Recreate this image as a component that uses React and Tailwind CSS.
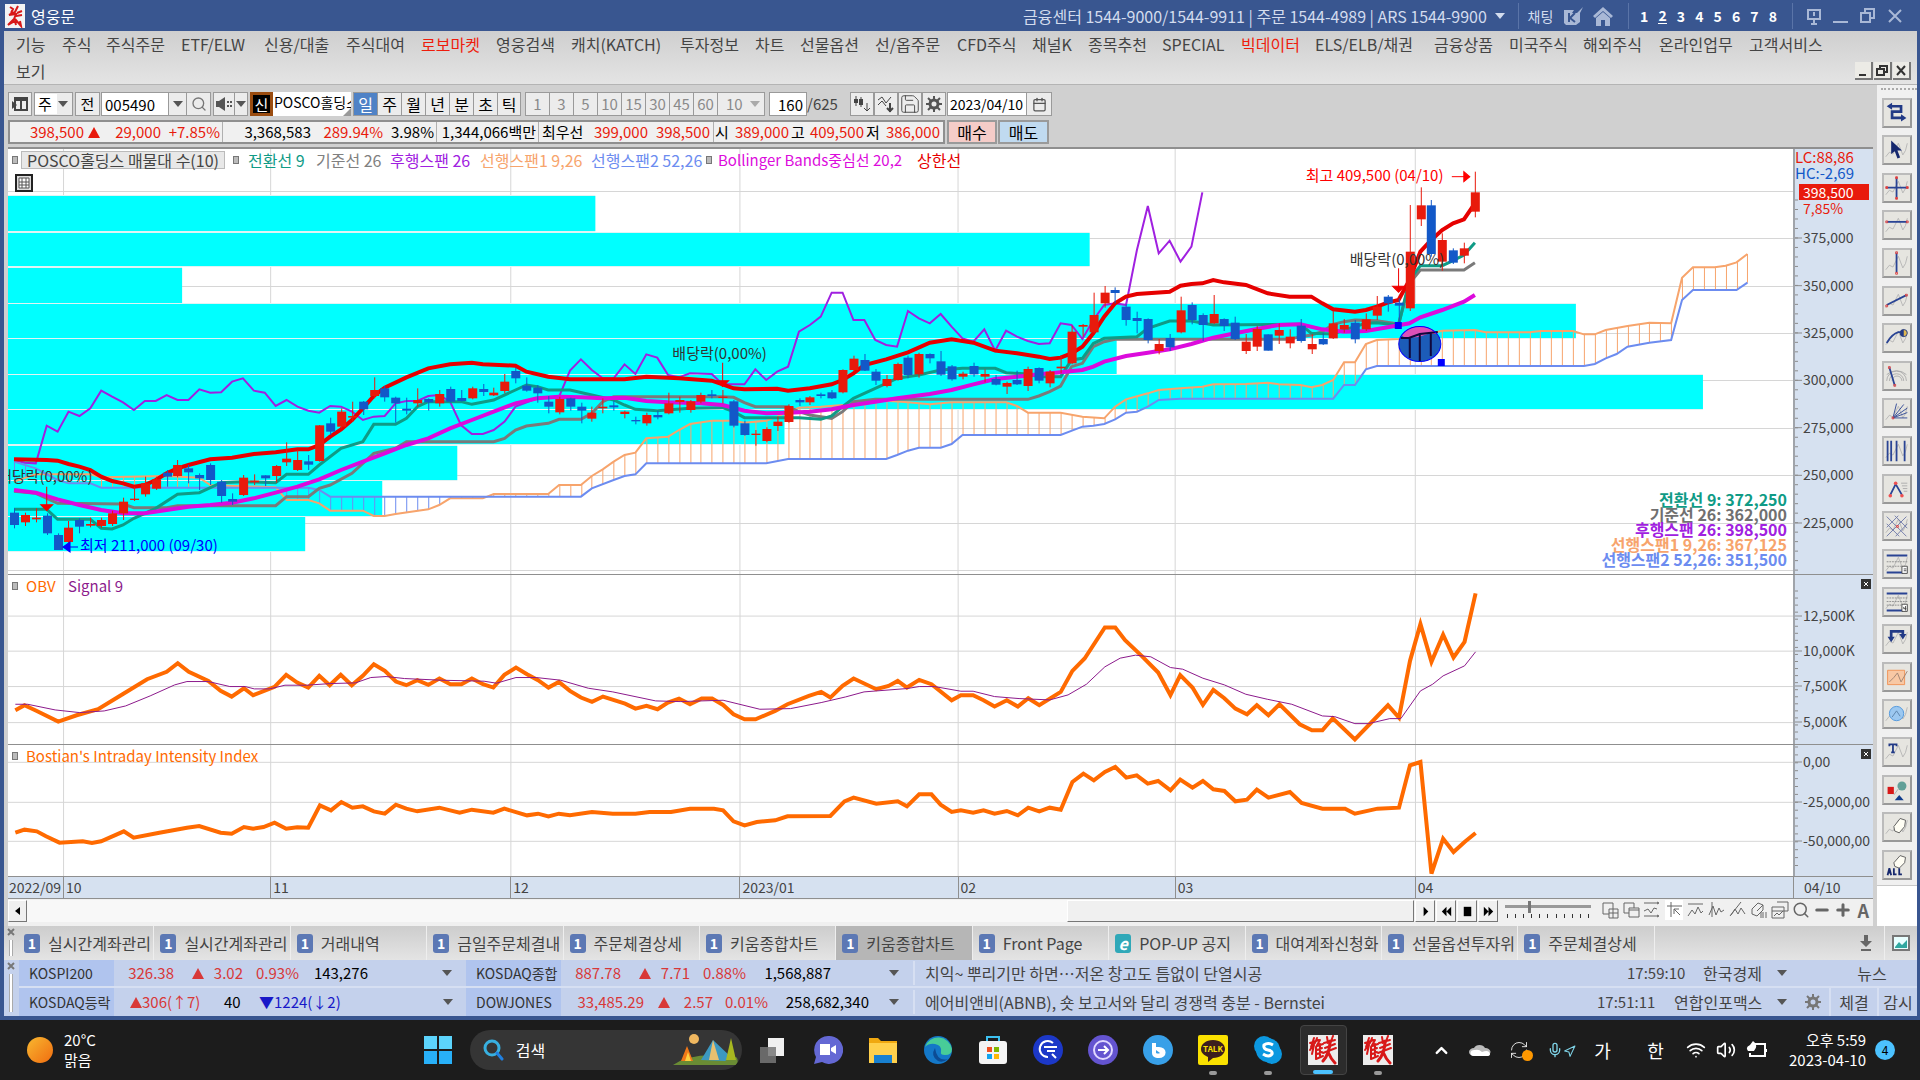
import { useState } from 'react'
import {
  Calendar,
  ChevronUp,
  Mic,
  Minus,
  Navigation,
  Plus,
  RefreshCw,
  Save,
  Search,
  Settings,
  Volume2,
  Wifi,
} from 'lucide-react'

const MENU = [
  ['기능', 'w-[46px]'],
  ['주식', 'w-[44px]'],
  ['주식주문', 'w-[75px]'],
  ['ETF/ELW', 'w-[83px]'],
  ['신용/대출', 'w-[82px]'],
  ['주식대여', 'w-[75px]'],
  ['로보마켓', 'w-[75px] text-[#ee1c0c]'],
  ['영웅검색', 'w-[75px]'],
  ['캐치(KATCH)', 'w-[109px]'],
  ['투자정보', 'w-[75px]'],
  ['차트', 'w-[45px]'],
  ['선물옵션', 'w-[75px]'],
  ['선/옵주문', 'w-[82px]'],
  ['CFD주식', 'w-[75px]'],
  ['채널K', 'w-[56px]'],
  ['종목추천', 'w-[74px]'],
  ['SPECIAL', 'w-[79px]'],
  ['빅데이터', 'w-[74px] text-[#ee1c0c]'],
  ['ELS/ELB/채권', 'w-[119px]'],
  ['금융상품', 'w-[75px]'],
  ['미국주식', 'w-[74px]'],
  ['해외주식', 'w-[76px]'],
  ['온라인업무', 'w-[90px]'],
  ['고객서비스', 'w-[80px]'],
]

const TABS = [
  '실시간계좌관리',
  '실시간계좌관리',
  '거래내역',
  '금일주문체결내',
  '주문체결상세',
  '키움종합차트',
  '키움종합차트',
  'Front Page',
  'POP-UP 공지',
  '대여계좌신청화',
  '선물옵션투자위',
  '주문체결상세',
]

// chart geometry: 160 bars, y values are thirds of a pixel counted from the toolbar
const PLOT_W = 1784
const PRICE_H = 425
const X = (i) => 6 + i * 10.896
const Y = (v) => (v - 27) / 3

const MONTHS = [
  [55, '10'],
  [262, '11'],
  [502, '12'],
  [731, '2023/01'],
  [949, '02'],
  [1166, '03'],
  [1406, '04'],
]

const PRICE_TICKS = [
  [294, '375,000'],
  [437, '350,000'],
  [579, '325,000'],
  [721, '300,000'],
  [863, '275,000'],
  [1006, '250,000'],
  [1149, '225,000'],
]

const VOLUME_BARS = [
  [168, 273, 587],
  [278, 378, 1081],
  [383, 487, 174],
  [491, 592, 1567],
  [597, 701, 1108],
  [705, 807, 1694],
  [811, 914, 776],
  [919, 1020, 449],
  [1024, 1129, 374],
  [1132, 1233, 297],
]

// high, body top, body bottom, low, up(1)/down(0)
const CANDLES = [
  [1105, 1118, 1155, 1165, 0], [1118, 1125, 1147, 1158, 1], [1105, 1133, 1138, 1147, 1], [1120, 1127, 1180, 1185, 0],
  [1180, 1185, 1230, 1230, 0], [1143, 1163, 1206, 1210, 1], [1135, 1140, 1160, 1180, 0], [1133, 1152, 1157, 1162, 1],
  [1133, 1140, 1158, 1163, 1], [1112, 1120, 1152, 1158, 1], [1073, 1085, 1120, 1140, 1], [1040, 1076, 1080, 1083, 1],
  [1010, 1030, 1063, 1070, 1], [1010, 1018, 1046, 1050, 1], [990, 998, 1010, 1040, 0], [960, 975, 1008, 1012, 1],
  [975, 985, 997, 1030, 0], [1000, 1005, 1015, 1050, 0], [970, 975, 1020, 1035, 0], [1020, 1025, 1068, 1088, 0],
  [1060, 1077, 1085, 1095, 0], [1005, 1013, 1065, 1068, 1], [1003, 1022, 1027, 1035, 1], [1006, 1006, 1015, 1038, 0],
  [975, 978, 1008, 1028, 1], [907, 956, 967, 978, 1], [930, 960, 990, 993, 1], [945, 964, 974, 990, 0],
  [855, 856, 963, 965, 1], [833, 850, 875, 885, 0], [805, 815, 860, 865, 1], [785, 828, 833, 845, 1],
  [783, 785, 808, 825, 0], [712, 750, 768, 775, 1], [738, 745, 772, 785, 0], [770, 773, 790, 848, 0],
  [773, 806, 812, 823, 0], [745, 780, 790, 800, 1], [775, 777, 787, 812, 0], [750, 762, 790, 800, 1],
  [740, 747, 785, 788, 0], [750, 774, 783, 785, 0], [740, 745, 775, 778, 1], [732, 747, 756, 768, 0],
  [743, 758, 766, 768, 1], [702, 725, 753, 760, 1], [683, 693, 715, 730, 0], [712, 737, 752, 755, 0],
  [735, 743, 760, 788, 0], [768, 785, 800, 820, 0], [770, 777, 817, 823, 1], [773, 775, 800, 812, 0],
  [788, 800, 812, 850, 0], [800, 818, 836, 845, 1], [775, 800, 805, 820, 1], [782, 796, 802, 812, 0],
  [812, 815, 822, 835, 1], [830, 840, 844, 853, 0], [818, 825, 850, 857, 1], [812, 825, 832, 838, 0],
  [758, 790, 820, 823, 1], [770, 780, 786, 818, 1], [780, 784, 810, 818, 1], [758, 765, 785, 790, 1],
  [750, 763, 768, 775, 0], [750, 770, 774, 790, 1], [780, 784, 857, 862, 0], [842, 850, 885, 887, 0],
  [870, 881, 885, 917, 1], [862, 867, 903, 907, 1], [830, 845, 858, 873, 1], [793, 798, 846, 848, 1],
  [775, 780, 787, 798, 0], [768, 772, 787, 795, 1], [758, 763, 768, 775, 0], [750, 757, 775, 777, 0],
  [688, 690, 757, 760, 1], [647, 656, 690, 695, 1], [642, 660, 692, 693, 0], [687, 695, 722, 735, 0],
  [705, 717, 738, 742, 1], [668, 672, 720, 722, 1], [647, 653, 705, 715, 0], [638, 642, 703, 713, 1],
  [640, 642, 655, 670, 0], [633, 664, 704, 708, 0], [675, 679, 718, 722, 0], [695, 701, 710, 718, 1],
  [668, 678, 703, 710, 0], [688, 702, 710, 727, 1], [705, 717, 734, 736, 0], [725, 729, 740, 762, 1],
  [692, 720, 733, 735, 0], [680, 687, 738, 753, 1], [682, 684, 722, 730, 0], [690, 695, 730, 742, 1],
  [647, 680, 685, 700, 1], [557, 575, 670, 673, 1], [552, 555, 560, 590, 1], [458, 525, 577, 580, 1],
  [438, 458, 490, 503, 1], [442, 450, 459, 490, 0], [492, 500, 540, 557, 0], [515, 534, 543, 580, 0],
  [535, 537, 600, 610, 0], [597, 612, 633, 643, 1], [582, 594, 622, 633, 0], [470, 511, 577, 580, 1],
  [487, 495, 540, 553, 0], [520, 525, 555, 603, 0], [465, 522, 550, 552, 1], [535, 537, 558, 573, 0],
  [530, 548, 597, 600, 0], [582, 605, 633, 642, 1], [558, 567, 620, 633, 1], [583, 583, 632, 632, 0],
  [550, 570, 587, 612, 1], [568, 590, 610, 625, 1], [537, 557, 603, 608, 0], [582, 612, 628, 642, 1],
  [580, 597, 613, 615, 0], [513, 550, 595, 597, 1], [537, 555, 568, 578, 1], [540, 548, 598, 610, 0],
  [520, 538, 568, 573, 1], [468, 500, 527, 540, 1], [465, 470, 490, 515, 0], [475, 488, 497, 550, 0],
  [195, 335, 505, 513, 1], [142, 196, 238, 258, 1], [180, 196, 342, 350, 0], [280, 300, 365, 392, 1],
  [325, 331, 368, 372, 0], [308, 325, 347, 370, 1], [95, 157, 215, 232, 1],
]

// [bar index, y] pairs written flat
const UPPER = [0, 958, 3, 960, 4, 962, 5, 972, 6, 980, 7, 990, 8, 1010, 9, 1023, 10, 1030, 11, 1040, 12, 1035, 13, 1020, 14, 1000, 15, 985, 16, 975, 18, 958, 20, 953, 22, 942, 24, 937, 26, 928, 27, 928, 28, 915, 29, 890, 30, 868, 31, 840, 32, 805, 33, 768, 34, 743, 36, 712, 38, 685, 40, 673, 42, 668, 43, 673, 46, 677, 47, 695, 49, 710, 51, 718, 56, 718, 58, 710, 61, 715, 64, 722, 65, 733, 66, 745, 67, 748, 70, 746, 71, 752, 73, 745, 75, 733, 76, 720, 77, 700, 78, 675, 80, 658, 82, 637, 84, 608, 86, 598, 88, 608, 90, 632, 92, 640, 94, 650, 95, 657, 96, 653, 97, 640, 98, 620, 99, 580, 100, 530, 101, 490, 102, 470, 103, 462, 106, 455, 107, 437, 108, 432, 109, 430, 110, 420, 111, 427, 113, 435, 115, 460, 117, 470, 119, 470, 120, 490, 121, 508, 123, 515, 124, 510, 125, 500, 126, 488, 127, 480, 128, 420, 129, 335, 130, 300, 131, 270, 132, 250, 133, 238, 134, 190]
const MIDDLE = [0, 1050, 2, 1058, 4, 1078, 6, 1095, 8, 1110, 10, 1120, 12, 1120, 14, 1110, 16, 1100, 18, 1095, 20, 1088, 22, 1075, 24, 1058, 26, 1040, 28, 1018, 30, 990, 32, 965, 34, 940, 36, 915, 38, 895, 40, 865, 42, 840, 44, 815, 46, 790, 48, 775, 50, 770, 52, 772, 54, 775, 56, 773, 58, 783, 60, 787, 63, 790, 65, 795, 67, 812, 69, 820, 71, 818, 73, 815, 75, 808, 77, 795, 79, 785, 81, 775, 84, 762, 86, 750, 88, 733, 90, 717, 92, 710, 94, 703, 96, 697, 98, 690, 99, 680, 100, 665, 102, 648, 104, 638, 106, 628, 108, 612, 110, 593, 112, 580, 114, 567, 116, 555, 118, 553, 120, 568, 122, 575, 124, 573, 126, 562, 128, 550, 129, 532, 131, 510, 133, 485, 134, 465]
const BASE = [0, 1054, 2, 1060, 4, 1090, 10, 1092, 11, 1103, 14, 1103, 15, 1097, 24, 1097, 25, 1070, 27, 1070, 28, 1045, 29, 1035, 31, 1000, 33, 940, 35, 925, 36, 905, 44, 905, 45, 895, 46, 870, 47, 858, 49, 850, 50, 838, 52, 838, 53, 820, 54, 785, 55, 770, 65, 770, 66, 772, 67, 788, 68, 800, 71, 800, 72, 815, 73, 825, 74, 830, 75, 835, 76, 815, 77, 785, 79, 778, 93, 778, 94, 768, 95, 755, 96, 738, 97, 680, 98, 670, 99, 620, 100, 605, 101, 598, 117, 598, 118, 590, 119, 585, 120, 575, 121, 553, 122, 545, 123, 540, 125, 542, 127, 552, 128, 430, 129, 390, 133, 390, 134, 368]
const CONVERSION = [0, 1108, 3, 1108, 4, 1138, 7, 1138, 8, 1165, 9, 1167, 10, 1155, 11, 1135, 13, 1105, 15, 1063, 17, 1058, 19, 1028, 21, 1025, 24, 1028, 25, 1003, 27, 1003, 28, 975, 30, 925, 32, 905, 33, 853, 35, 853, 36, 835, 37, 800, 38, 785, 41, 785, 42, 793, 44, 780, 46, 750, 47, 735, 48, 740, 49, 750, 51, 750, 53, 765, 55, 780, 56, 795, 57, 808, 59, 812, 62, 805, 65, 803, 66, 815, 67, 833, 72, 833, 74, 838, 75, 828, 76, 800, 77, 775, 79, 745, 81, 715, 83, 705, 85, 690, 87, 685, 90, 685, 91, 698, 93, 702, 94, 710, 96, 710, 97, 660, 98, 655, 99, 610, 100, 595, 103, 590, 104, 565, 106, 543, 108, 543, 110, 555, 118, 553, 119, 580, 121, 582, 122, 570, 123, 560, 124, 550, 125, 548, 127, 555, 128, 420, 129, 377, 131, 377, 132, 362, 133, 345, 134, 308]
const LAGGING = [0, 960, 1, 968, 2, 970, 3, 857, 4, 875, 5, 815, 6, 828, 7, 805, 8, 752, 9, 770, 10, 787, 11, 810, 12, 783, 13, 783, 14, 765, 15, 780, 16, 780, 17, 748, 18, 758, 19, 757, 20, 725, 21, 715, 22, 752, 23, 758, 24, 798, 25, 780, 26, 800, 27, 812, 28, 818, 29, 798, 30, 800, 31, 815, 32, 840, 33, 830, 34, 828, 35, 790, 36, 783, 37, 783, 38, 768, 39, 765, 40, 785, 41, 855, 42, 882, 43, 882, 44, 870, 45, 845, 46, 800, 48, 775, 50, 770, 51, 692, 52, 658, 53, 690, 54, 715, 55, 715, 56, 673, 57, 702, 58, 643, 59, 653, 60, 705, 61, 712, 62, 700, 64, 702, 65, 733, 67, 733, 68, 688, 69, 720, 70, 695, 71, 680, 72, 575, 73, 555, 74, 530, 75, 458, 76, 458, 77, 540, 78, 540, 79, 600, 80, 615, 81, 620, 82, 513, 83, 535, 84, 550, 85, 522, 86, 560, 87, 595, 88, 605, 89, 568, 90, 632, 91, 572, 92, 590, 93, 603, 94, 612, 95, 610, 96, 550, 97, 555, 98, 597, 99, 540, 100, 495, 101, 490, 102, 495, 103, 330, 104, 198, 105, 340, 106, 302, 107, 365, 108, 320, 109, 157]
const SPAN_A = [0, 1025, 2, 1003, 7, 1003, 8, 1012, 14, 1008, 17, 1013, 18, 1035, 24, 1042, 25, 1080, 27, 1080, 28, 1090, 29, 1112, 32, 1112, 33, 1128, 34, 1128, 35, 1122, 38, 1108, 39, 1095, 40, 1075, 43, 1075, 44, 1062, 49, 1062, 50, 1035, 52, 1035, 53, 1008, 54, 988, 55, 965, 56, 945, 57, 938, 58, 895, 60, 890, 61, 870, 62, 852, 64, 842, 66, 842, 67, 848, 69, 842, 70, 830, 72, 803, 74, 800, 76, 795, 77, 795, 79, 780, 82, 787, 84, 793, 86, 787, 91, 787, 92, 798, 93, 818, 96, 818, 98, 830, 100, 835, 101, 800, 102, 778, 104, 760, 105, 750, 107, 745, 109, 740, 110, 733, 113, 732, 115, 728, 116, 733, 118, 735, 119, 742, 120, 735, 121, 720, 122, 667, 123, 667, 124, 612, 125, 600, 127, 597, 129, 590, 130, 580, 131, 572, 134, 570, 135, 577, 139, 577, 140, 573, 143, 573, 144, 583, 145, 583, 146, 570, 148, 558, 150, 548, 152, 550, 153, 413, 154, 382, 156, 382, 157, 377, 158, 367, 159, 342]
const SPAN_B = [0, 965, 2, 985, 4, 1020, 5, 1030, 7, 1030, 8, 1043, 27, 1043, 28, 1050, 29, 1070, 52, 1070, 53, 1045, 55, 1020, 56, 1008, 57, 1003, 58, 970, 69, 970, 71, 957, 80, 957, 81, 945, 82, 932, 83, 923, 85, 923, 86, 912, 87, 885, 96, 885, 98, 860, 99, 857, 100, 852, 101, 838, 102, 818, 103, 815, 104, 800, 105, 780, 107, 776, 121, 776, 122, 735, 123, 735, 124, 688, 125, 678, 144, 678, 145, 672, 146, 655, 147, 642, 148, 620, 150, 608, 152, 600, 153, 480, 154, 450, 158, 450, 159, 428]

// lower panels: x runs 13..2926 over the plot width, the second half is stored from zero
const HALF = 1568
const OBV = [
  [25, 448, 40, 433, 60, 450, 95, 482, 125, 463, 160, 445, 200, 400, 240, 355, 272, 333, 290, 307, 308, 333, 340, 360, 360, 390, 378, 407, 398, 382, 413, 403, 448, 378, 467, 342, 485, 365, 503, 380, 521, 345, 538, 373, 556, 342, 574, 373, 592, 345, 610, 310, 628, 330, 646, 362, 663, 373, 681, 358, 699, 372, 717, 353, 735, 370, 753, 370, 770, 353, 788, 370, 805, 380, 823, 342, 842, 320, 860, 340, 878, 358, 895, 380, 912, 363, 930, 390, 948, 410, 966, 423, 984, 407, 1020, 428, 1037, 443, 1055, 435, 1073, 445, 1090, 425, 1108, 413, 1126, 430, 1145, 413, 1162, 413, 1180, 432, 1197, 460, 1215, 475, 1233, 475, 1265, 450, 1285, 430, 1320, 405, 1340, 393, 1355, 410, 1375, 375, 1393, 353, 1430, 385, 1450, 375, 1465, 360, 1480, 380, 1500, 357, 1520, 370, 1553, 418],
  [0, 403, 20, 403, 37, 418, 55, 437, 75, 418, 93, 437, 110, 412, 128, 433, 163, 393, 182, 330, 202, 293, 235, 200, 252, 200, 268, 238, 295, 285, 322, 335, 342, 403, 358, 343, 378, 380, 395, 432, 412, 387, 430, 412, 448, 443, 467, 460, 483, 433, 502, 463, 520, 430, 553, 490, 573, 508, 590, 508, 607, 472, 643, 535, 697, 433, 715, 470, 733, 300, 750, 190, 768, 303, 787, 222, 804, 290, 822, 243, 840, 98],
]
const SIGNAL = [
  [25, 430, 45, 430, 90, 447, 130, 455, 170, 450, 205, 435, 245, 405, 285, 372, 305, 362, 340, 362, 375, 377, 400, 377, 415, 384, 440, 384, 465, 373, 500, 373, 540, 368, 580, 366, 605, 350, 630, 347, 660, 353, 720, 358, 790, 361, 810, 367, 842, 350, 875, 350, 915, 358, 960, 382, 1000, 393, 1070, 420, 1110, 422, 1180, 418, 1240, 445, 1290, 443, 1340, 425, 1380, 408, 1410, 393, 1480, 383, 1500, 377, 1525, 377],
  [0, 391, 20, 391, 55, 407, 95, 413, 145, 417, 175, 402, 205, 370, 235, 318, 260, 292, 285, 283, 310, 288, 342, 320, 362, 325, 395, 352, 430, 372, 465, 400, 500, 415, 540, 430, 590, 465, 610, 467, 643, 488, 665, 488, 700, 473, 718, 473, 750, 390, 770, 370, 787, 345, 822, 315, 840, 273],
]
const INTENSITY = [
  [25, 812, 40, 803, 60, 808, 75, 823, 97, 842, 135, 838, 150, 843, 165, 838, 202, 808, 218, 827, 260, 812, 305, 797, 325, 792, 360, 812, 378, 815, 398, 795, 413, 800, 430, 795, 448, 782, 467, 800, 485, 796, 503, 797, 522, 730, 540, 745, 557, 720, 575, 737, 592, 733, 610, 748, 628, 755, 646, 728, 663, 740, 681, 748, 717, 737, 750, 752, 770, 743, 805, 752, 823, 740, 860, 760, 878, 755, 895, 763, 912, 755, 930, 760, 966, 750, 1000, 755, 1037, 755, 1060, 750, 1095, 750, 1126, 740, 1165, 740, 1180, 745, 1197, 778, 1215, 790, 1235, 780, 1265, 775, 1285, 763, 1355, 762, 1378, 718, 1393, 707, 1430, 725, 1465, 718, 1480, 733, 1500, 697, 1520, 697, 1535, 728, 1553, 750],
  [0, 745, 20, 752, 37, 745, 55, 755, 75, 747, 93, 760, 110, 737, 128, 748, 145, 737, 163, 743, 182, 660, 200, 635, 217, 655, 235, 630, 252, 615, 270, 647, 287, 640, 305, 665, 322, 657, 342, 685, 358, 653, 378, 677, 395, 657, 412, 682, 430, 687, 448, 718, 467, 713, 483, 683, 502, 707, 537, 690, 556, 723, 590, 740, 627, 740, 643, 755, 680, 740, 715, 737, 733, 610, 750, 600, 768, 935, 787, 830, 804, 870, 822, 840, 840, 813],
]

function toPoints(flat, fx, fy) {
  const out = []
  for (let k = 0; k < flat.length; k += 2) out.push(`${fx(flat[k])},${fy(flat[k + 1])}`)
  return out.join(' ')
}

function valueAt(flat, i) {
  for (let k = 0; k < flat.length - 2; k += 2) {
    if (i >= flat[k] && i <= flat[k + 2]) {
      const t = (i - flat[k]) / (flat[k + 2] - flat[k])
      return flat[k + 1] + t * (flat[k + 3] - flat[k + 1])
    }
  }
  return flat[flat.length - 1]
}

function PriceLine({ data, color, width }) {
  return <polyline points={toPoints(data, X, Y)} fill="none" stroke={color} strokeWidth={width} vectorEffect="non-scaling-stroke" />
}

function DividendMark({ i, y }) {
  return (
    <g fill="#f00000" stroke="#f00000">
      <path d={`M${X(i)} ${Y(y)}V${Y(y) + 20}`} />
      <path d={`M${X(i) - 6} ${Y(y) + 18}h12l-6 6z`} />
    </g>
  )
}

function PriceChart() {
  const bars = Array.from({ length: 160 }, (_, i) => i)
  return (
    <svg className="absolute inset-0 size-full" viewBox={`0 0 ${PLOT_W} ${PRICE_H}`} preserveAspectRatio="none">
      <g stroke="#d6d6d6">
        {[152, 294, 437, 579, 721, 863, 1006, 1149, 1291].map((v) => (
          <path key={v} d={`M0 ${Math.round(Y(v)) + 0.5}H${PLOT_W}`} />
        ))}
        {MONTHS.map(([x]) => (
          <path key={x} d={`M${x + 0.5} 0V${PRICE_H}`} />
        ))}
      </g>
      {VOLUME_BARS.map(([top, bottom, w]) => (
        <rect key={top} x="0" y={Math.round(Y(top)) - 1} width={w} height={Math.round((bottom - top) / 3) + 2} fill="#e0f4f4" />
      ))}
      {VOLUME_BARS.map(([top, bottom, w]) => (
        <rect key={top} x="0" y={Math.round(Y(top))} width={w} height={Math.round((bottom - top) / 3)} fill="#00ffff" />
      ))}
      {bars.map((i) => {
        const a = valueAt(SPAN_A, i)
        const b = valueAt(SPAN_B, i)
        return <path key={i} d={`M${Math.round(X(i)) + 0.5} ${Y(a)}V${Y(b)}`} stroke={a < b ? '#f7a46c' : '#6c8cf0'} />
      })}
      <PriceLine data={LAGGING} color="#a020e0" width={2} />
      <PriceLine data={SPAN_A} color="#f7a46c" width={2} />
      <PriceLine data={SPAN_B} color="#6c8cf0" width={2} />
      <PriceLine data={BASE} color="#7a7a7a" width={3} />
      <PriceLine data={CONVERSION} color="#0f9b86" width={3} />
      <PriceLine data={MIDDLE} color="#dc0adc" width={4} />
      <PriceLine data={UPPER} color="#e60000" width={4} />
      {CANDLES.map(([high, top, bottom, low, up], i) => (
        <g key={i} fill={up ? '#e81a0c' : '#1258c8'}>
          <rect x={Math.round(X(i))} y={Y(high)} width="1" height={(low - high) / 3} />
          <rect x={Math.round(X(i)) - 4} y={Y(top)} width="9" height={Math.max((bottom - top) / 3, 1)} />
        </g>
      ))}
      <DividendMark i={3} y={1040} />
      <DividendMark i={65} y={668} />
      <DividendMark i={127} y={385} />
      <g stroke="#ff0000" fill="#ff0000">
        <path d={`M1443 ${Y(110)}h14`} />
        <path d={`M1455 ${Y(110) - 5}v10l6 -5z`} />
      </g>
      <g stroke="#0000ff" fill="#0000ff">
        <path d="M56 398h14" />
        <path d="M62 393v10l-7 -5z" />
      </g>
      <g>
        <ellipse cx="1411" cy="195" rx="21" ry="17.5" fill="#1c5cb8" />
        <path d="M1393 186a21 17.5 0 0 1 36 -1l-10 0l-9 3l-14 1z" fill="#dc50b8" />
        <path d="M1392 189l8 0l11 -4l18 -2M1401 189v20M1411 185v27M1422 184v23" stroke="#10083c" strokeWidth="2" fill="none" />
        <ellipse cx="1411" cy="195" rx="21" ry="17.5" fill="none" stroke="#0000ff" />
        <rect x="1386" y="173" width="7" height="7" fill="#0000ff" />
        <rect x="1429" y="210" width="7" height="7" fill="#0000ff" />
      </g>
    </svg>
  )
}

function LowerChart({ top, bottom, grid, series }) {
  return (
    <svg className="absolute inset-0 size-full" viewBox={`13 ${top} 2913 ${bottom - top}`} preserveAspectRatio="none">
      <g stroke="#d6d6d6">
        {grid.map((y) => (
          <path key={y} d={`M13 ${y}H2926`} vectorEffect="non-scaling-stroke" />
        ))}
        {MONTHS.map(([x]) => (
          <path key={x} d={`M${(x + 8.5) * 1.633} ${top}V${bottom}`} vectorEffect="non-scaling-stroke" />
        ))}
      </g>
      {series.map(({ data, color, width }) => (
        <polyline
          key={color}
          points={`${toPoints(data[0], (x) => x, (y) => y)} ${toPoints(data[1], (x) => x + HALF, (y) => y)}`}
          fill="none"
          stroke={color}
          strokeWidth={width}
          vectorEffect="non-scaling-stroke"
        />
      ))}
    </svg>
  )
}

// text pinned to a point of the price canvas
function Note({ x, y, className, children }) {
  return (
    <span
      className={`absolute -translate-y-1/2 text-[15px] leading-4 whitespace-nowrap ${className}`}
      style={{ left: `${(x / PLOT_W) * 100}%`, top: `${(y / PRICE_H) * 100}%` }}
    >
      {children}
    </span>
  )
}

function Axis({ height, major, minor, children }) {
  return (
    <div className="relative w-20 shrink-0 border-l-2 border-[#a0a4aa] bg-[#d6e1f0] text-sm text-[#444]">
      <svg className="absolute inset-0 h-full w-3" viewBox={`0 0 12 ${height}`} preserveAspectRatio="none" stroke="#8c8c8c">
        {minor.map((y) => (
          <path key={y} d={`M0 ${y}h3`} />
        ))}
        {major.map(([y]) => (
          <path key={y} d={`M0 ${y}h7`} />
        ))}
      </svg>
      {major.map(([y, label]) => (
        <span key={label} className="absolute left-2 -translate-y-1/2 leading-4 whitespace-nowrap" style={{ top: `${((y - 1) / height) * 100}%` }}>
          {label}
        </span>
      ))}
      {children}
    </div>
  )
}

function range(from, to, step) {
  const out = []
  for (let v = from; v < to; v += step) out.push(v)
  return out
}

function Marker() {
  return <span className="h-2 w-[6px] border border-[#777] bg-[#bbb]" />
}

function CloseBox() {
  return (
    <button aria-label="지표 닫기" className="absolute top-1 right-[2px] flex size-[10px] items-center justify-center bg-[#333]">
      <svg viewBox="0 0 6 6" className="size-[6px]" stroke="#fff">
        <path d="M1 1l4 4M5 1l-4 4" />
      </svg>
    </button>
  )
}

function Caret({ className = 'text-[#555]' }) {
  return (
    <svg viewBox="0 0 10 6" className={`h-[6px] w-[10px] shrink-0 ${className}`} fill="currentColor">
      <path d="M0 0h10L5 6z" />
    </svg>
  )
}

function UpTri() {
  return (
    <svg viewBox="0 0 12 11" className="h-[11px] w-3 shrink-0" fill="currentColor">
      <path d="M6 0l6 11H0z" />
    </svg>
  )
}

function Gear() {
  return (
    <svg viewBox="0 0 16 16" className="size-4" fill="none" stroke="currentColor">
      <circle cx="8" cy="8" r="4" strokeWidth="3" />
      <path d="M8 0v3M8 13v3M0 8h3M13 8h3M2 2l3 3M11 11l3 3M14 2l-3 3M5 11l-3 3" strokeWidth="2" />
    </svg>
  )
}

function HeroLogo({ className }) {
  return (
    <svg viewBox="0 0 20 24" className={className}>
      <rect width="20" height="24" fill="#f4f4f4" />
      <path d="M5 3l3 2l-2 4M13 2l-3 6l-6 3l7-1l-2 5l-6 6l7-4l1 4M12 9l5-2M11 12l6-1M10 15l6 7l-1-5" fill="none" stroke="#d81818" strokeWidth="2" />
    </svg>
  )
}

function TitleBar() {
  return (
    <header className="flex h-[31px] items-center bg-[#395690] pr-4 pl-[5px] text-[#d3dcee]">
      <HeroLogo className="h-6 w-5" />
      <h1 className="ml-1.5 text-white">영웅문</h1>
      <p className="ml-auto w-[468px] whitespace-pre">금융센터 1544-9000/1544-9911 | 주문 1544-4989 | ARS 1544-9900</p>
      <button aria-label="전화번호 목록" className="flex w-[27px] pl-1">
        <Caret className="text-[#d3dcee]" />
      </button>
      <button className="h-[26px] w-10 border-l border-[#5a74a8] pl-1 text-sm">채팅</button>
      <button aria-label="K 메신저" className="ml-1 text-[#a9b8d6]">
        <svg viewBox="0 0 22 20" className="h-5 w-[22px]">
          <path d="M2 4h10l-2 3h5l6-6l-3 6v9l-4 3H4l-2-2z" fill="currentColor" />
          <path d="M7 7v9M13 7l-5 5l5 4" stroke="#395690" strokeWidth="2" fill="none" />
        </svg>
      </button>
      <button aria-label="홈" className="ml-2 w-9 text-[#a9b8d6]">
        <svg viewBox="0 0 22 20" className="h-5 w-[22px]">
          <path d="M11 1l10 9l-2 2l-8-7l-8 7l-2-2z" fill="currentColor" />
          <path d="M4 12l7-6l7 6v8h-5v-6H9v6H4z" fill="currentColor" />
        </svg>
      </button>
      <nav className="flex h-[26px] w-[164px] items-center justify-between border-l border-[#5a74a8] pr-[15px] pl-[11px] text-sm font-bold text-white">
        {[1, 2, 3, 4, 5, 6, 7, 8].map((n) => (
          <button key={n} className={n === 2 ? 'border-b border-white leading-4' : 'leading-4'}>
            {n}
          </button>
        ))}
      </nav>
      <div className="flex h-[26px] items-center gap-[9px] border-l border-[#5a74a8] pl-3 text-[#a9b8d6]">
        {['M3 3h12v9H3zM9 12v5M6 17h6M9 5v4', 'M1 15h15', 'M2 6h9v9H2zM6 6V2h9v9h-4', 'M3 3l12 12M15 3L3 15'].map((d) => (
          <button key={d} aria-label="창 조절">
            <svg viewBox="0 0 18 18" className="size-[18px]" fill="none" stroke="currentColor" strokeWidth="2">
              <path d={d} />
            </svg>
          </button>
        ))}
      </div>
    </header>
  )
}

function MenuBar() {
  return (
    <div className="border-b border-[#b4b4b4] bg-linear-to-b from-[#cfcfcf] to-[#e4e4e4] pl-3 text-[#444]">
      <nav className="flex h-[26px] items-center overflow-hidden">
        {MENU.map(([label, cls]) => (
          <button key={label} className={`shrink-0 text-left whitespace-nowrap ${cls}`}>
            {label}
          </button>
        ))}
      </nav>
      <div className="flex h-[27px] items-center justify-between pr-1.5">
        <button className="w-11 text-left">보기</button>
        <div className="flex gap-px">
          {['M4 13h7', 'M3 7h7v6H3zM6 7V4h7v6h-3', 'M4 4l8 9M12 4l-8 9'].map((d) => (
            <button key={d} aria-label="차트 창 조절" className="size-[18px] border-r-2 border-b-2 border-[#777] bg-[#ecebe6]">
              <svg viewBox="0 0 16 16" className="size-4" fill="none" stroke="#333" strokeWidth="2">
                <path d={d} />
              </svg>
            </button>
          ))}
        </div>
      </div>
    </div>
  )
}

const toolBtn = 'flex h-6 items-center justify-center border border-[#9a9a9a] bg-[#ececec] text-black'

function ToolBar() {
  const [period, setPeriod] = useState('일')
  return (
    <div className="flex h-6 text-[15px]">
      <button aria-label="창 연결" className={`${toolBtn} w-6`}>
        <svg viewBox="0 0 16 16" className="size-4" fill="none" stroke="#444" strokeWidth="2">
          <path d="M3 2h12v12H3zM3 4h12M9 4v10" />
          <path d="M0 5l5 4l-5 4z" fill="#444" stroke="none" />
        </svg>
      </button>
      <div className="relative ml-[2px] flex w-[39px] items-center border border-[#9a9a9a] bg-[#ececec]">
        <select aria-label="종목 구분" className="w-full appearance-none bg-linear-to-r from-white from-[22px] to-[#ececec] to-[22px] pl-[3px]">
          <option>주</option>
        </select>
        <span className="pointer-events-none absolute right-1">
          <Caret />
        </span>
      </div>
      <button className={`${toolBtn} ml-[2px] w-[25px]`}>전</button>
      <input aria-label="종목코드" defaultValue="005490" className="ml-px h-6 w-[68px] border border-[#9a9a9a] bg-white px-[3px]" />
      <button aria-label="종목 목록" className={`${toolBtn} w-[18px] border-l-0`}>
        <Caret />
      </button>
      <button aria-label="종목 찾기" className={`${toolBtn} w-6 border-l-0`}>
        <Search size={16} color="#777" />
      </button>
      <button aria-label="소리" className={`${toolBtn} ml-[2px] w-[22px]`}>
        <svg viewBox="0 0 16 14" className="h-[14px] w-4" fill="#555">
          <path d="M0 4h3l6-4v14l-6-4H0zM11 4h2v2h-2zM11 8h2v2h-2zM14 4h2v2h-2zM14 8h2v2h-2z" />
        </svg>
      </button>
      <button aria-label="소리 설정" className={`${toolBtn} w-[13px] border-l-0`}>
        <Caret />
      </button>
      <button className="ml-[2px] h-6 w-[23px] border-3 border-[#9a4c10] bg-black leading-none text-white">신</button>
      <span className="relative w-[78px] overflow-hidden bg-white pl-px text-sm leading-5 whitespace-nowrap">
        POSCO홀딩스
        <svg viewBox="0 0 8 8" className="absolute right-0 bottom-0 size-2" fill="#999">
          <path d="M8 0v8H0z" />
        </svg>
      </span>
      <div className="ml-[2px] flex text-base">
        {['일', '주', '월', '년', '분', '초', '틱'].map((p) => (
          <button
            key={p}
            onClick={() => setPeriod(p)}
            className={`h-6 w-6 border border-r-0 border-[#9a9a9a] leading-5 last:border-r ${p === period ? 'bg-[#4f82c6] text-white' : 'bg-[#ececec] text-black'}`}
          >
            {p}
          </button>
        ))}
      </div>
      <div className="ml-1 flex text-[#8a8a8a]">
        {['1', '3', '5', '10', '15', '30', '45', '60'].map((n) => (
          <button key={n} className="h-6 w-6 border border-r-0 border-[#9a9a9a] bg-[#ececec]">
            {n}
          </button>
        ))}
        <div className="relative flex w-[48px] items-center border border-[#9a9a9a] bg-[#ececec]">
          <select aria-label="주기" className="w-full appearance-none pl-2">
            <option>10</option>
          </select>
          <span className="pointer-events-none absolute right-1">
            <Caret className="text-[#aaa]" />
          </span>
        </div>
      </div>
      <input aria-label="표시 개수" defaultValue="160" className="ml-1 h-6 w-[38px] border border-[#9a9a9a] bg-white pr-[3px] text-right" />
      <span className="w-[43px] leading-6 text-[#444]">/625</span>
      <button aria-label="차트 종류" className={`${toolBtn} w-6`}>
        <svg viewBox="0 0 18 18" className="size-[18px]" fill="none" stroke="#444" strokeWidth="1">
          <path d="M3 1v10M8 2v10M14 8v8M11 13l3 3l3-3" />
          <path d="M3 4v4M8 4v6" strokeWidth="4" />
        </svg>
      </button>
      <button aria-label="지표 추가" className={`${toolBtn} w-6`}>
        <svg viewBox="0 0 18 18" className="size-[18px]" fill="none" stroke="#444">
          <path d="M1 5l4-3l4 6l5-6M1 10l4-4l4 5" />
          <path d="M13 8v9M10 13l3 3l3-3" strokeWidth="2" />
        </svg>
      </button>
      <button aria-label="저장" className={`${toolBtn} w-6`}>
        <Save size={22} strokeWidth={1} color="#444" className="shrink-0" />
      </button>
      <button aria-label="설정" className={`${toolBtn} w-6`}>
        <span className="text-[#555]">
          <Gear />
        </span>
      </button>
      <input aria-label="날짜" defaultValue="2023/04/10" className="ml-px h-6 w-20 border border-[#9a9a9a] bg-white px-[2px] text-sm" />
      <button aria-label="달력" className={`${toolBtn} w-[25px] border-l-0`}>
        <Calendar size={15} color="#555" />
      </button>
    </div>
  )
}

function QuoteBar() {
  return (
    <div className="flex h-6 text-[15px]">
      <div className="flex w-[937px] border-2 border-[#8f8f8f] bg-[#f0f0f0] leading-5 whitespace-nowrap text-[#e81a0c] [&>span]:shrink-0">
        <span className="w-[74px] text-right">398,500</span>
        <span className="flex w-4 items-center pl-1">
          <UpTri />
        </span>
        <span className="w-[61px] text-right">29,000</span>
        <span className="w-[62px] border-r border-[#b0b0b0] pr-[2px] text-right">+7.85%</span>
        <span className="w-[88px] text-right text-black">3,368,583</span>
        <span className="w-[72px] text-right">289.94%</span>
        <span className="w-[54px] border-r border-[#b0b0b0] pr-[2px] text-right text-black">3.98%</span>
        <span className="w-[102px] border-r border-[#b0b0b0] pr-[2px] text-right text-black">1,344,066백만</span>
        <span className="w-12 pl-[3px] text-black">최우선</span>
        <span className="w-[61px] text-right">399,000</span>
        <span className="w-[66px] border-r border-[#b0b0b0] pr-[3px] text-right">398,500</span>
        <span className="w-[18px] pl-px text-black">시</span>
        <span className="w-[57px] text-right">389,000</span>
        <span className="w-[18px] pl-[2px] text-black">고</span>
        <span className="w-[57px] text-right">409,500</span>
        <span className="w-[18px] pl-[2px] text-black">저</span>
        <span className="w-[58px] text-right">386,000</span>
      </div>
      <button className="ml-[2px] w-[50px] border-2 border-[#9a9a9a] bg-[#f5ccc8] text-base leading-5">매수</button>
      <button className="ml-px w-[51px] border-2 border-[#9a9a9a] bg-[#c0daf0] text-base leading-5">매도</button>
    </div>
  )
}

const wave = <path d="M2 22l4-5l4 2l6-12l5 13l3-5l2-8" stroke="#b4b4b4" />
const DRAW_TOOLS = [
  ['신호 연결', <g key="a" stroke="#223a86" strokeWidth="3"><path d="M8 7h11v6H9v7h12" /><path d="M9 3v8l-6-4zM19 16v8l6-4z" fill="#223a86" stroke="none" /></g>],
  ['선택', <g key="b">{wave}<path d="M8 4l0 15l4-3l3 8l3-1l-3-8h5z" fill="#16286e" /></g>],
  ['십자선', <g key="c">{wave}<path d="M3 14h23M14 3v22" stroke="#2a4494" strokeWidth="2" /><path d="M2 13h2v2H2zM25 13h2v2h-2zM13 2h2v2h-2zM13 25h2v2h-2z" fill="#e04040" stroke="#e04040" /></g>],
  ['수평선', <g key="d">{wave}<path d="M3 11h23" stroke="#2a4494" strokeWidth="2" /><path d="M2 10h2v2H2zM25 10h2v2h-2z" stroke="#e04040" /></g>],
  ['수직선', <g key="e">{wave}<path d="M14 3v22" stroke="#2a4494" strokeWidth="2" /><path d="M13 2h2v2h-2zM13 25h2v2h-2z" stroke="#e04040" /></g>],
  ['추세선', <g key="f">{wave}<path d="M3 19L25 8" stroke="#2a4494" strokeWidth="2" /><path d="M2 19h2v2H2zM24 7h2v2h-2z" stroke="#e04040" /></g>],
  ['자동 추세선', <g key="g">{wave}<path d="M3 20Q9 10 16 8h6" stroke="#2a4494" strokeWidth="2" /><circle cx="22" cy="9" r="4" fill="#e0b850" stroke="#223a86" /><path d="M22 5a4 4 0 0 0 0 8z" fill="#223a86" /></g>],
  ['피보나치 아크', <g key="h"><path d="M3 20a11 11 0 0 1 22 0M6 20a8 8 0 0 1 16 0M9 20a5 5 0 0 1 11 0M3 13a16 16 0 0 1 22 0" stroke="#aaa" /><path d="M6 5l6 20" stroke="#2a4494" strokeWidth="2" /><path d="M5 4h2v2H5zM11 24h2v2h-2z" stroke="#e04040" /></g>],
  ['팬 라인', <g key="i">{wave}<path d="M10 20L14 4M10 20L22 5M10 20L26 9M10 20L26 14M10 20h16" stroke="#2a4494" /><path d="M9 19h2v2H9z" stroke="#e04040" /></g>],
  ['시간대', <g key="j">{wave}<path d="M4 3v23M8 3v23M14 3v23M23 3v23" stroke="#2a4494" strokeWidth="2" /></g>],
  ['삼등분선', <g key="k"><path d="M7 21L13 9L20 21" stroke="#2a4494" strokeWidth="2" /><path d="M19 8h7M20 11h6M21 14h5M22 17h4" stroke="#aaa" /><g fill="#f05050"><circle cx="13" cy="8" r="2" /><circle cx="7" cy="22" r="2" /><circle cx="20" cy="22" r="2" /></g></g>],
  ['갠 그리드', <g key="l">{wave}<path d="M3 4l22 22M25 4L3 26M12 3l14 14M3 12l14 14M16 3L3 16M26 12L13 26" stroke="#6c78a8" /><path d="M14 14h2v2h-2z" stroke="#e04040" /></g>],
  ['피보나치 되돌림', <g key="m">{wave}<path d="M3 5h23M3 24h18" stroke="#2a4494" strokeWidth="2" /><path d="M3 12h23M3 17h16" stroke="#888" strokeDasharray="2 1" /><path d="M20 17h6v8h-6zM22 20h3M22 22h3" stroke="#444" fill="#fff" /></g>],
  ['4등분선', <g key="n">{wave}<path d="M3 5h23M3 24h18" stroke="#2a4494" strokeWidth="2" /><path d="M3 10h23M3 14h23M3 18h16" stroke="#888" strokeDasharray="2 1" /><path d="M20 17h6v8h-6zM22 20v2h3M24 19v5" stroke="#444" fill="#fff" /></g>],
  ['변곡점', <g key="o">{wave}<path d="M8 15V6h13v5" stroke="#223a86" strokeWidth="3" /><path d="M4 12h8l-4 6zM17 9h8l-4 6z" fill="#223a86" /></g>],
  ['사각형', <g key="p"><path d="M4 7h19v16H4z" fill="#f8c8a4" stroke="#f09050" /><path d="M6 20l5-5l4-5l4 10l7-12" stroke="#9a8070" /></g>],
  ['원', <g key="q">{wave}<circle cx="14" cy="14" r="8" fill="#9cc8f0" stroke="#4a94dc" /><path d="M9 18l5-7l4 6" stroke="#5a80a8" /></g>],
  ['문자', <g key="r">{wave}<path d="M5 6h10M10 6v9M6 5v3M14 5v3M8 15h4" stroke="#223a86" strokeWidth="2" /></g>],
  ['도형', <g key="s"><path d="M4 11h7v8H4z" fill="#d81818" /><circle cx="20" cy="10" r="5" fill="#60a098" /><path d="M17 20l5 6h-10z" fill="#103c8c" /><path d="M11 20l6-8" stroke="#aaa" /></g>],
  ['지우기', <g key="t">{wave}<path d="M11 14l7-9l6 2l-1 7l-6 7l-5-2z" fill="#fffef4" stroke="#555" /></g>],
  ['모두 지우기', <g key="u"><path d="M11 12l7-8l6 2l-1 6l-6 6l-5-2z" fill="#fffef4" stroke="#555" /><path d="M4 26l2-8l2 8M5 23h3M11 18v7h3M17 18v7h3" stroke="#16286e" strokeWidth="2" /></g>],
]

function DrawTools() {
  return (
    <aside className="mb-10 flex w-10 shrink-0 flex-col justify-between border-b border-[#c8c8c8] bg-[#f0f0f0] pt-[3px] pb-[5px]">
      <div className="ml-1 h-[2px] w-9 border-t-2 border-dotted border-[#aaa]" />
      {DRAW_TOOLS.map(([label, icon]) => (
        <button key={label} aria-label={label} title={label} className="ml-[5px] size-[30px] border-2 border-t-[#bbb] border-r-[#999] border-b-[#999] border-l-[#bbb] bg-[#e6e5e0]">
          <svg viewBox="0 0 29 29" className="size-[26px]" fill="none">
            {icon}
          </svg>
        </button>
      ))}
    </aside>
  )
}

function PriceLegend() {
  return (
    <div className="absolute top-[2px] left-1 flex h-[18px] items-center leading-[18px] whitespace-nowrap">
      <Marker />
      <button className="ml-[3px] flex h-[18px] w-[204px] items-center justify-center border border-[#bbb] bg-[#e8e8e8] text-[#444]">POSCO홀딩스 매물대 수(10)</button>
      <span className="mr-[9px] ml-2 flex">
        <Marker />
      </span>
      <span className="w-[68px] text-[#0f9b86]">전환선 9</span>
      <span className="w-[74px] text-[#808080]">기준선 26</span>
      <span className="w-[90px] text-[#a020e0]">후행스팬 26</span>
      <span className="w-[111px] text-[#f7a46c]">선행스팬1 9,26</span>
      <span className="w-[115px] text-[#6c8cf0]">선행스팬2 52,26</span>
      <Marker />
      <span className="ml-[6px] w-[199px] text-[15px] text-[#dc0adc]">Bollinger Bands중심선 20,2</span>
      <span className="text-[#e60000]">상한선</span>
    </div>
  )
}

function ChartArea() {
  return (
    <main className="flex min-w-0 flex-1 flex-col border-t-2 border-[#8f8f8f] bg-white">
      <section className="flex min-h-60 flex-[425] basis-0">
        <div className="relative flex-1 overflow-hidden">
          <PriceChart />
          <PriceLegend />
          <button aria-label="격자" className="absolute top-[25px] left-[7px] size-[18px] border-2 border-[#222] bg-[#ddd]">
            <svg viewBox="0 0 14 14" className="size-[14px]" stroke="#555" fill="#fff">
              <path d="M2 2h10v10H2zM2 6h10M2 9h10M5 2v10M9 2v10" />
            </svg>
          </button>
          <Note x={1297} y={26} className="text-[#ff0000]">최고 409,500 (04/10)</Note>
          <Note x={1341} y={110} className="text-[#333]">배당락(0,00%)</Note>
          <Note x={664} y={204} className="text-[#333]">배당락(0,00%)</Note>
          <Note x={-10} y={327} className="text-[#333]">배당락(0,00%)</Note>
          <Note x={72} y={396} className="text-[#0000ff]">최저 211,000 (09/30)</Note>
          <div className="absolute right-1.5 bottom-[7px] text-right leading-[15px] font-bold">
            <p className="text-[#0f9b86]">전환선 9: 372,250</p>
            <p className="text-[#707070]">기준선 26: 362,000</p>
            <p className="text-[#a020e0]">후행스팬 26: 398,500</p>
            <p className="text-[#f7a46c]">선행스팬1 9,26: 367,125</p>
            <p className="text-[#6c8cf0]">선행스팬2 52,26: 351,500</p>
          </div>
        </div>
        <Axis height={PRICE_H} major={PRICE_TICKS.map(([v, t]) => [Y(v), t])} minor={range(51, 425, 9.49)}>
          <div className="absolute inset-x-0 top-0 text-[15px] text-[#e81a0c]">
            <p className="leading-4">LC:88,86</p>
            <p className="leading-4 text-[#1258c8]">HC:-2,69</p>
            <p className="mt-[3px] mr-1 ml-1 bg-[#e81a0c] pl-1 text-sm leading-4 text-white">398,500</p>
            <p className="pl-2 text-sm leading-4">7,85%</p>
          </div>
        </Axis>
      </section>
      <section className="flex min-h-24 flex-[169] basis-0 border-t border-[#8f8f8f]">
        <div className="relative flex-1 overflow-hidden">
          <LowerChart
            top={43}
            bottom={549}
            grid={[166, 271, 377, 485]}
            series={[
              { data: OBV, color: '#ff6a00', width: 4 },
              { data: SIGNAL, color: '#8c1a8c', width: 1 },
            ]}
          />
          <div className="absolute top-[2px] left-1 flex h-[18px] items-center gap-2 text-[15px]">
            <Marker />
            <span className="w-[34px] text-[#ff6a00]">OBV</span>
            <span className="text-[#8c1a8c]">Signal 9</span>
          </div>
        </div>
        <Axis height={169} major={[[41, '12,500K'], [76, '10,000K'], [111, '7,500K'], [147, '5,000K']]} minor={range(16, 166, 7.05)}>
          <CloseBox />
        </Axis>
      </section>
      <section className="flex min-h-20 flex-[131] basis-0 border-t border-[#8f8f8f]">
        <div className="relative flex-1 overflow-hidden">
          <LowerChart top={549} bottom={942} grid={[601, 721, 838]} series={[{ data: INTENSITY, color: '#ff6a00', width: 4 }]} />
          <div className="absolute top-[2px] left-1 flex h-[18px] items-center gap-2 text-[15px] text-[#ff6a00]">
            <Marker />
            Bostian's Intraday Intensity Index
          </div>
        </div>
        <Axis height={131} major={[[17, '0,00'], [57, '-25,000,00'], [96, '-50,000,00']]} minor={range(2, 128, 7.9)}>
          <CloseBox />
        </Axis>
      </section>
      <div className="flex h-[23px] shrink-0 border-y border-[#8f8f8f] bg-[#d6e1f0] text-sm leading-5 text-[#444]">
        <div className="relative flex-1">
          <span className="absolute left-px">2022/09</span>
          {MONTHS.map(([x, label]) => (
            <span key={x} className="absolute h-full border-l border-[#8f8f8f] pl-[2px]" style={{ left: `${(x / PLOT_W) * 100}%` }}>
              {label}
            </span>
          ))}
        </div>
        <div className="w-20 border-l border-[#8f8f8f] pl-[10px]">04/10</div>
      </div>
      <ScrollRow />
    </main>
  )
}

const PLAY = ['M6 3l5 5l-5 5z', 'M8 3v10L3 8zM13 3v10L8 8z', 'M4 3h8v10H4z', 'M3 3l5 5l-5 5zM8 3l5 5l-5 5z']
const VIEW_TOOLS = [
  'M2 2h10v6M2 2v11h6M8 8h9v9H8zM12 8v9M8 12h9',
  'M2 2h10v5M2 2v10h5M7 7h10v9H7zM7 9h10',
  'M1 2h14M1 15h14M1 10l4-2l3 4l3-5l3 1M14 1l2 1l-2 1M14 14l2 1l-2 1',
  'M2 5h15M6 1v15M9 8l6 6M9 8v5M9 8h5',
  'M2 3h15M2 15l4-6l3 4l3-7l3 6l2-2',
  'M5 1v15M2 14l4-9l3 9l3-7l2 4l3-2',
  'M2 15L13 1M3 14l4-6l3 5l3-6l4 6',
  'M3 8l6-6l5 2v5l-6 6l-5-2zM8 10l6-6M12 11v6M14 11v6M17 11v6',
  'M6 1h11v9h-4M1 6h12v11H1zM1 10h12M3 15l3-3l2 2l4-4',
]

function ScrollRow() {
  const bevel = 'flex h-[22px] items-center justify-center border border-t-white border-r-[#777] border-b-[#777] border-l-white bg-[#f0f0f0]'
  return (
    <div className="flex h-[27px] shrink-0 items-start bg-[#f0f0f0] pt-px text-[#666]">
      <button aria-label="왼쪽으로" className={`${bevel} w-[19px]`}>
        <svg viewBox="0 0 16 16" className="size-4" fill="#000">
          <path d="M10 4v8L5 8z" />
        </svg>
      </button>
      <div className="flex h-[22px] flex-1 justify-end bg-[#f8f8f8]">
        <div className={`${bevel} w-1/4`} />
      </div>
      {PLAY.map((d) => (
        <button key={d} aria-label="재생 조절" className={`${bevel} ml-px w-5`}>
          <svg viewBox="0 0 16 16" className="size-[15px]" fill="#000">
            <path d={d} />
          </svg>
        </button>
      ))}
      <div className="relative mr-[10px] ml-[7px] h-[22px] w-[86px]">
        <input
          type="range"
          aria-label="재생 속도"
          defaultValue={28}
          className="block h-3 w-full appearance-none bg-transparent [&::-webkit-slider-runnable-track]:h-[3px] [&::-webkit-slider-runnable-track]:bg-[#999] [&::-webkit-slider-thumb]:-mt-1 [&::-webkit-slider-thumb]:h-3 [&::-webkit-slider-thumb]:w-[3px] [&::-webkit-slider-thumb]:appearance-none [&::-webkit-slider-thumb]:bg-[#777]"
        />
        <div className="mt-[2px] flex h-1 justify-between px-[2px]">
          {range(0, 11, 1).map((n) => (
            <span key={n} className="w-px bg-[#333]" />
          ))}
        </div>
      </div>
      <div className="mr-[2px] flex w-[270px] items-center justify-between">
        {VIEW_TOOLS.map((d, i) => (
          <button key={d} aria-label="보기 도구" className={i === 3 ? 'bg-white' : ''}>
            <svg viewBox="0 0 18 18" className="h-5 w-[18px]" fill="none" stroke="currentColor">
              <path d={d} />
            </svg>
          </button>
        ))}
        <button aria-label="돋보기"><Search size={18} /></button>
        <button aria-label="축소"><Minus size={18} strokeWidth={4} /></button>
        <button aria-label="확대"><Plus size={18} strokeWidth={4} /></button>
        <button className="px-[2px] text-lg leading-5 font-bold">A</button>
      </div>
    </div>
  )
}

function Grip() {
  return (
    <div className="flex w-[14px] shrink-0 flex-col items-center pt-[2px] text-[#777]">
      <button aria-label="막대 닫기">
        <svg viewBox="0 0 8 8" className="size-2" stroke="currentColor" strokeWidth="2">
          <path d="M1 1l6 6M7 1l-6 6" />
        </svg>
      </button>
      <span className="my-1 w-1 flex-1 border-x border-[#aaa] bg-white" />
    </div>
  )
}

function TabBar() {
  const [active, setActive] = useState(6)
  return (
    <nav className="flex h-[34px] bg-linear-to-b from-[#cdcdcd] to-[#e4e4e4] text-[#444]">
      <Grip />
      {TABS.map((label, i) => (
        <button
          key={i}
          onClick={() => setActive(i)}
          className={`flex w-[7.13%] min-w-0 items-center gap-2 overflow-hidden border-r border-[#eee] pl-[6px] whitespace-nowrap ${i === active ? 'bg-[#b6b6b6]' : ''}`}
        >
          {i === 8 ? (
            <span className="flex h-[19px] w-4 shrink-0 items-center justify-center rounded-[3px] bg-[#30a8b8] text-base leading-4 font-bold text-white italic">e</span>
          ) : (
            <span className="flex h-[19px] w-4 shrink-0 items-center justify-center rounded-[3px] bg-[#5c78b4] text-sm leading-4 font-bold text-white">1</span>
          )}
          {label}
        </button>
      ))}
      <button aria-label="내려받기" className="mr-[12px] ml-auto">
        <svg viewBox="0 0 12 17" className="h-[17px] w-3" fill="#666">
          <path d="M4 0h4v6h4l-6 6l-6-6h4zM1 14h10v2H1z" />
        </svg>
      </button>
      <button aria-label="그림" className="border-l border-[#eee] px-[7px]">
        <svg viewBox="0 0 18 16" className="h-4 w-[18px]">
          <path d="M1 1h16v14H1z" fill="#e8ffff" stroke="#777" strokeWidth="2" />
          <path d="M3 12l4-5l3 3l5-5v8H3z" fill="#30a8a0" />
        </svg>
      </button>
    </nav>
  )
}

function TickerRow({ children }) {
  return <div className="flex h-[28px] min-w-0 items-center whitespace-nowrap">{children}</div>
}

const tag = 'flex h-full w-[95px] shrink-0 items-center bg-[#b0c4ee] pl-[10px] text-sm text-[#333]'
const red = 'text-[#d83838]'

function Ticker() {
  return (
    <footer className="flex bg-[#c4d1ec] text-[#444]">
      <Grip />
      <div className="min-w-0 flex-1 divide-y-2 divide-[#d6dff2] pl-px text-[15px] [&_span]:shrink-0">
        <TickerRow>
          <span className={tag}>KOSPI200</span>
          <span className={`w-[60px] text-right ${red}`}>326.38</span>
          <span className={`flex w-[38px] justify-end pr-2 ${red}`}><UpTri /></span>
          <span className={`w-[31px] text-right ${red}`}>3.02</span>
          <span className={`w-14 text-right ${red}`}>0.93%</span>
          <span className="w-[69px] text-right text-black">143,276</span>
          <button aria-label="지수 선택" className="flex w-[98px] items-center justify-end pr-[14px]"><Caret /></button>
          <span className={tag}>KOSDAQ종합</span>
          <span className={`w-[60px] text-right ${red}`}>887.78</span>
          <span className={`flex w-[38px] justify-end pr-2 ${red}`}><UpTri /></span>
          <span className={`w-[31px] text-right ${red}`}>7.71</span>
          <span className={`w-14 text-right ${red}`}>0.88%</span>
          <span className="w-[85px] text-right text-black">1,568,887</span>
          <button aria-label="지수 선택" className="flex w-[82px] items-center justify-end pr-[14px]"><Caret /></button>
          <a href="#news1" className="min-w-0 flex-1 overflow-hidden border-l-2 border-[#d6dff2] pl-[10px] text-base">치익~ 뿌리기만 하면…저온 창고도 틈없이 단열시공</a>
          <span className="w-[76px]">17:59:10</span>
          <span className="w-[74px] text-base">한국경제</span>
          <button aria-label="언론사 선택" className="flex w-[68px]"><Caret /></button>
          <button className="w-[72px] pr-[18px] text-base">뉴스</button>
        </TickerRow>
        <TickerRow>
          <span className={tag}>KOSDAQ등락</span>
          <span className={`flex w-[110px] items-center pl-4 ${red}`}><UpTri />306(↑7)</span>
          <span className="w-[35px] text-black">40</span>
          <span className="flex w-[184px] items-center text-[#1818c8]">▼1224(↓2)</span>
          <button aria-label="지수 선택" className="flex w-[23px] items-center"><Caret /></button>
          <span className={tag}>DOWJONES</span>
          <span className={`w-[83px] text-right ${red}`}>33,485.29</span>
          <span className={`flex w-[34px] justify-end pr-2 ${red}`}><UpTri /></span>
          <span className={`w-[35px] text-right ${red}`}>2.57</span>
          <span className={`w-[55px] text-right ${red}`}>0.01%</span>
          <span className="w-[101px] text-right text-black">258,682,340</span>
          <button aria-label="지수 선택" className="flex w-[44px] items-center justify-end pr-[14px]"><Caret /></button>
          <a href="#news2" className="min-w-0 flex-1 overflow-hidden border-l-2 border-[#d6dff2] pl-[10px] text-base">에어비앤비(ABNB), 숏 보고서와 달리 경쟁력 충분 - Bernstei</a>
          <span className="w-[77px]">17:51:11</span>
          <span className="w-[103px] text-base">연합인포맥스</span>
          <button aria-label="언론사 선택" className="flex w-7"><Caret /></button>
          <button aria-label="설정" className="w-6 text-[#777]"><Gear /></button>
          <button className="h-full w-12 border-l-2 border-[#d6dff2] text-base">체결</button>
          <button className="h-full w-10 border-l-2 border-[#d6dff2] text-base">감시</button>
        </TickerRow>
      </div>
    </footer>
  )
}

function TaskIcon({ label, dot, active, children }) {
  return (
    <button aria-label={label} className={`relative flex h-[50px] w-[47px] items-center justify-center rounded ${active ? 'border border-[#444] bg-[#2c2c2c]' : ''}`}>
      <svg viewBox="0 0 30 30" className="size-[30px]">
        {children}
      </svg>
      {dot && <span className={`absolute bottom-0 h-1 rounded-full ${active ? 'w-5 bg-[#4cc2ff]' : 'w-2 bg-[#999]'}`} />}
    </button>
  )
}

const heroMark = (
  <g>
    <rect width="30" height="30" fill="#ececec" />
    <g stroke="#d81818" fill="none" strokeLinecap="round">
      <path d="M6 3l-3 9M2 8l9-3M8 6l-6 9M6 10l-2 9M9 3l-2 5" strokeWidth="2" />
      <path d="M12 5l-4 7v12M9 11l6-2M9 15l5-2M9 19l5-2M8 24l7-3M12 9v12" strokeWidth="2" />
      <path d="M19 2l1 6M25 1l-3 8M16 8l11-3M17 13l10-4M15 18l13-5" strokeWidth="2" />
      <path d="M22 6q0 12-7 20M20 17q3 7 7 11" strokeWidth="3" />
    </g>
  </g>
)

function Taskbar() {
  return (
    <div className="flex h-[60px] items-center bg-[#1c1c1c] text-white">
      <button className="flex w-[21.6%] shrink-0 items-center gap-[11px] pl-[27px] text-left text-[15px] leading-5">
        <svg viewBox="0 0 26 26" className="size-[26px]">
          <defs>
            <linearGradient id="sun" x1="0" y1="0" x2="1" y2="1">
              <stop stopColor="#f8b830" />
              <stop offset="1" stopColor="#f06c10" />
            </linearGradient>
          </defs>
          <circle cx="13" cy="13" r="13" fill="url(#sun)" />
        </svg>
        <span>
          20°C
          <br />
          맑음
        </span>
      </button>
      <nav className="flex shrink-0 items-center gap-2">
        <TaskIcon label="시작">
          <path d="M1 1h13v13H1zM16 1h13v13H16z" fill="#5cd4fc" />
          <path d="M1 16h13v13H1zM16 16h13v13H16z" fill="#28b0f8" />
        </TaskIcon>
        <button className="flex h-10 w-[272px] items-center gap-3 overflow-hidden rounded-full bg-[#353535] pl-3 text-base">
          <svg viewBox="0 0 22 22" className="size-[22px]" fill="none" strokeWidth="3">
            <circle cx="10" cy="9" r="7" stroke="#38b0e0" />
            <path d="M15 14l5 6" stroke="#2080e0" strokeLinecap="round" />
          </svg>
          검색
          <svg viewBox="0 0 70 34" className="mr-[1px] ml-auto h-[34px] w-[70px]">
            <path d="M2 32q20-14 62-8q4 0 2 8z" fill="#6a8c34" />
            <circle cx="23" cy="6" r="5" fill="#f0b860" />
            <path d="M30 27L42 7l18 17l-6 4z" fill="#3c98c0" />
            <path d="M42 7l-4 20h10z" fill="#e8c070" />
            <path d="M60 5l-5 22h10z" fill="#a8b820" />
            <path d="M10 28l6-15l6 15z" fill="#f07818" />
            <path d="M14 28l3-9l3 9z" fill="#fcd040" />
          </svg>
        </button>
        <TaskIcon label="작업 보기">
          <path d="M10 3h16v18H10z" fill="#f0f0f0" />
          <path d="M2 12h16v16H2z" fill="#777" fillOpacity="0.85" />
        </TaskIcon>
        <TaskIcon label="채팅">
          <path d="M15 1a14 14 0 1 1-6 26l-8 2l2-7A14 14 0 0 1 15 1z" fill="#6468d4" />
          <path d="M7 9h10v11H7zM18 13l5-3v9l-5-3z" fill="#fff" />
        </TaskIcon>
        <TaskIcon label="탐색기">
          <path d="M1 3h9l3 3h16v22H1z" fill="#f0a810" />
          <path d="M1 8h28v20H1z" fill="#ffd04c" />
          <path d="M6 20h18v8H6z" fill="#1880d0" />
        </TaskIcon>
        <TaskIcon label="Edge">
          <circle cx="15" cy="15" r="14" fill="#1478c8" />
          <path d="M2 12A14 14 0 0 1 29 14q0 6-7 6q-5 0-4-3q1-7-6-8q-6-1-10 3z" fill="#48cc98" />
          <path d="M12 13q-5 8 3 13q5 2 10-2q-11 3-13-11z" fill="#0c4c94" />
        </TaskIcon>
        <TaskIcon label="스토어">
          <path d="M9 8V2h12v6" fill="none" stroke="#3cc0f0" strokeWidth="2" />
          <rect x="1" y="6" width="28" height="23" rx="3" fill="#f4f4f4" />
          <path d="M9 12h5v5H9z" fill="#f05022" />
          <path d="M16 12h5v5h-5z" fill="#80b800" />
          <path d="M9 19h5v5H9z" fill="#10a4f0" />
          <path d="M16 19h5v5h-5z" fill="#ffb808" />
        </TaskIcon>
        <TaskIcon label="빠른 검색">
          <circle cx="15" cy="15" r="15" fill="#1c38c8" />
          <path d="M20 8a8 8 0 1 0-5 14M11 12h13M14 16h8M19 19l4 4" stroke="#fff" strokeWidth="2" fill="none" />
        </TaskIcon>
        <TaskIcon label="연결">
          <circle cx="15" cy="15" r="15" fill="#6454d0" />
          <circle cx="15" cy="15" r="9" fill="none" stroke="#e0d8ff" strokeWidth="2" />
          <path d="M10 15h9M16 11l4 4l-4 4" stroke="#fff" strokeWidth="2" fill="none" />
        </TaskIcon>
        <TaskIcon label="비">
          <circle cx="15" cy="15" r="15" fill="#38a0e8" />
          <path d="M9 8h4v4h3a6 5 0 0 1 0 11h-2a5 5 0 0 1-5-5z" fill="#fff" />
          <path d="M13 15v3a3 2 0 0 0 4 0z" fill="#38a0e8" />
        </TaskIcon>
        <TaskIcon label="카카오톡" dot>
          <rect width="30" height="30" rx="2" fill="#fae100" />
          <path d="M15 5c7 0 12 4 12 9s-5 9-12 9l-5 4v-5C6 20 3 18 3 14c0-5 5-9 12-9z" fill="#3c1e1e" />
          <text x="15" y="17" textAnchor="middle" fontSize="8" fontWeight="bold" fill="#fae100">TALK</text>
        </TaskIcon>
        <TaskIcon label="Skype" dot>
          <circle cx="11" cy="11" r="10" fill="#0c98e0" />
          <circle cx="19" cy="19" r="10" fill="#0c98e0" />
          <circle cx="15" cy="15" r="12" fill="#0c98e0" />
          <path d="M20 10q-5-3-9 0q-1 4 4 5t4 4q-3 4-9 0" stroke="#fff" strokeWidth="3" fill="none" />
        </TaskIcon>
        <TaskIcon label="영웅문" dot active>{heroMark}</TaskIcon>
        <TaskIcon label="영웅문 차트" dot>{heroMark}</TaskIcon>
      </nav>
      <div className="flex flex-1 items-center justify-end pr-[25px]">
        <div className="flex items-center gap-[18px]">
          <ChevronUp size={19} strokeWidth={3} />
          <svg viewBox="0 0 22 14" className="h-[14px] w-[22px]">
            <path d="M5 13a5 4 0 0 1 0-8a6 5 0 0 1 11 0a5 4 0 0 1 1 8z" fill="#bbb" />
            <path d="M5 13a4 3 0 0 1 1-6q4-1 7 2q7-3 8 2q0 2-3 2z" fill="#fff" />
          </svg>
          <span className="relative">
            <RefreshCw size={20} strokeWidth={1} />
            <span className="absolute -right-1 -bottom-px size-[11px] rounded-full bg-[#ff9800]" />
          </span>
          <span className="flex items-end text-[#7fd4e8]">
            <Mic size={16} />
            <Navigation size={13} />
          </span>
        </div>
        <button className="w-[53px] text-lg">가</button>
        <button className="w-[53px] text-lg">한</button>
        <div className="flex items-center gap-[10px] pl-1">
          <Wifi size={20} />
          <Volume2 size={20} />
          <svg viewBox="0 0 22 18" className="h-[18px] w-[22px]" fill="none" stroke="#fff" strokeWidth="2">
            <path d="M9 3h10v12H4v-3M20 8v3" />
            <path d="M7 0q6 4 1 10H2q-3-4 2-6z" fill="#fff" stroke="none" />
          </svg>
        </div>
        <p className="w-[98px] text-right text-[15px] leading-5">
          오후 5:59
          <br />
          2023-04-10
        </p>
        <span className="ml-[9px] flex size-5 items-center justify-center rounded-full bg-[#4cc2ff] text-xs text-black">4</span>
      </div>
    </div>
  )
}

export default function App() {
  return (
    <div className="flex min-h-screen flex-col bg-[#395690] font-['Noto_Sans_CJK_KR',sans-serif] text-base leading-5">
      <TitleBar />
      <div className="mr-[3px] mb-1 ml-1 flex flex-1 flex-col">
        <MenuBar />
        <div className="flex flex-1 bg-[#d0d0d0]">
          <div className="flex min-w-0 flex-1 flex-col">
            <div className="flex flex-col gap-1 pt-[7px] pb-[3px] pl-1">
              <ToolBar />
              <QuoteBar />
            </div>
            <div className="flex flex-1 pl-1">
              <ChartArea />
            </div>
          </div>
          <div className="ml-1 flex w-10 bg-white">
            <DrawTools />
          </div>
        </div>
        <TabBar />
        <Ticker />
      </div>
      <Taskbar />
    </div>
  )
}
